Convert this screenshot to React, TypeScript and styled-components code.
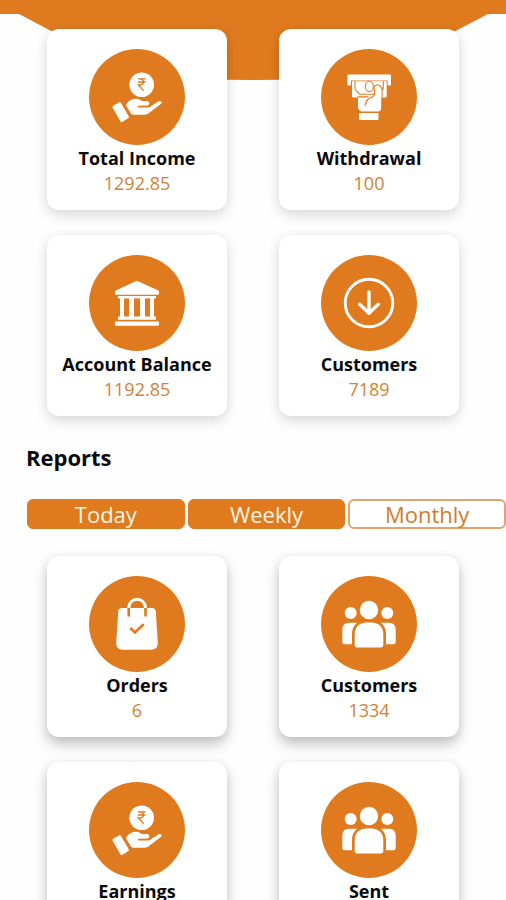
import React from "react";
import styled, { createGlobalStyle } from "styled-components";

const ORANGE = "#df7b1e";

const GlobalStyle = createGlobalStyle`
  *, *::before, *::after { box-sizing: border-box; }
  body {
    margin: 0;
    background: #fefefe;
    color: #0a0a0a;
    font-family: "Open Sans", "Noto Sans", sans-serif;
  }
`;

const Page = styled.main`
  height: 100vh;
  overflow-x: hidden;
  overflow-y: auto;
  scrollbar-width: none;
`;

const Banner = styled.header`
  height: 80px;
  margin-bottom: -51px;
  background: ${ORANGE};
  clip-path: polygon(
    0 0, 100% 0, 100% 14px, calc(100% - 18px) 14px, calc(100% - 142px) 79px,
    50% 100%, 142px 79px, 19px 14px, 0 14px
  );
`;

const CardGrid = styled.section`
  position: relative;
  display: grid;
  grid-template-columns: 1fr 1fr;
  gap: 25px 52px;
  padding: 0 47px;
`;

const Card = styled.article<{ $raised?: boolean }>`
  display: flex;
  flex-direction: column;
  align-items: center;
  min-height: 181px;
  padding-top: 20px;
  border-radius: 12px;
  background: #fff;
  box-shadow: ${({ $raised }) =>
    $raised
      ? "0 7px 14px rgba(0, 0, 0, 0.24), 0 0 10px rgba(0, 0, 0, 0.05)"
      : "0 5px 14px rgba(0, 0, 0, 0.14), 0 0 10px rgba(0, 0, 0, 0.04)"};
`;

const Badge = styled.svg`
  display: block;
  width: 96px;
  height: 96px;
`;

const CardTitle = styled.h2`
  margin: 0;
  font-size: 18px;
  font-weight: 700;
  line-height: 26px;
  white-space: nowrap;
`;

const CardValue = styled.p`
  margin: 0;
  color: #cf8336;
  font-size: 18px;
  line-height: 24px;
`;

const Heading = styled.h1`
  margin: 26px 26px 0;
  font-size: 22px;
  font-weight: 700;
  line-height: 30px;
`;

const Tabs = styled.nav`
  display: grid;
  grid-template-columns: repeat(3, 1fr);
  gap: 3px;
  margin: 27px 0;
  padding-left: 27px;
`;

const Tab = styled.button<{ $filled: boolean }>`
  height: 30px;
  padding: 0;
  border: ${({ $filled }) => ($filled ? `1px solid ${ORANGE}` : "2px solid #e0a46c")};
  border-radius: 6px;
  background: ${({ $filled }) => ($filled ? ORANGE : "#fff")};
  color: ${({ $filled }) => ($filled ? "#fff3e2" : "#cf7d2b")};
  font: 400 22px/24px "Open Sans", "Noto Sans", sans-serif;
  cursor: pointer;
`;

const HandCoin = () => (
  <>
    <circle cx="52.7" cy="35.7" r="12.3" />
    <path
      d="M49 29.800h7.500M49 33h7.500M50 29.800c6 0 6 6.200 0 6.200h-.8l5.500 5.800"
      fill="none"
      stroke={ORANGE}
      strokeWidth="1.300"
    />
    <path
      d="M25 58.100l5.700-3.400 7.700 13.300-5.700 3.600z"
      stroke="#fff"
      strokeWidth="3"
      strokeLinejoin="round"
    />
    <path d="M37 56.300c1.400-4 5.700-6.600 10.300-6.600 3.200 0 4.200 2.300 7 2.300h3.400c3.200 0 3.600 4 .8 4.500l-8.800.2c-1.200.2-1.200 1.600 0 1.800h8.800c2.600 0 3.600-1.600 5.200-2.600l6-3.700c2.200-1 4 1 2.400 2.600L60 64c-1.500 1.200-2.400 1.700-4 1.700H44.600c-1.500 0-2.300-.4-3-1.600z" />
  </>
);

const CashMachine = () => (
  <>
    <path d="M27.700 25.500h41q1.300 0 1.300 1.300v8.700q0 1-1 1h-1.300q-1 0-1-1v-4H30v4q0 1-1 1h-1.600q-1 0-1-1v-8.700q0-1.300 1.300-1.300z" />
    <path d="M31 32.300h34.700v14.600q0 1.700-1.700 1.700H32.700q-1.700 0-1.700-1.700z" />
    <g stroke={ORANGE} strokeWidth="1.100" fill="none">
      <path d="M34 32.300v6.500q0 2.500 2.200 4l2.400 2.400h14.600" />
      <path d="M62.300 32.300v7.500l-1.600 1.600" />
      <ellipse cx="48.300" cy="37.500" rx="4" ry="5.200" />
      <path d="M53.300 41.500q-1-4.500 1.700-5.300c3-.6 6.200 1 6 5.300v7" />
    </g>
    <path d="M54 40q.3-2.700 2.900-2.700 3 0 3.300 3.500V59q0 3.500-3.500 3.500H40.500q-3.500-1-3.500-5.500v-9h12q4.600-1.300 5-4z" />
    <path
      d="M36.500 47.800h11M53.500 41v3.500q.2 2.500-3.500 4-4 1.500-4.800 4.500l-1.200 3.800"
      fill="none"
      stroke={ORANGE}
      strokeWidth="1.200"
    />
    <rect x="38" y="64" width="19.500" height="7" rx="1" />
  </>
);

const Bank = () => (
  <>
    <path d="M48 25.700l20.800 9.500q1.200.6 1.200 1.700v1.600q0 1.200-1.200 1.200H27.200q-1.200 0-1.200-1.200v-1.600q0-1.100 1.200-1.700z" />
    <rect x="29" y="41" width="38" height="2.400" />
    <path d="M31 43h4v19h-4zM40 43h5v19h-5zM51 43h5v19h-5zM61 43h4v19h-4z" />
    <rect x="29" y="61.500" width="38" height="3.200" rx="0.600" />
    <rect x="26" y="66.500" width="44" height="4.300" rx="1" />
  </>
);

const DownArrow = () => (
  <g fill="none" stroke="#fff" strokeLinecap="round" strokeLinejoin="round">
    <circle cx="48" cy="48" r="23.800" strokeWidth="2.900" />
    <path d="M48 37v21M38.700 49.200l9.300 9 9.300-9" strokeWidth="3.400" />
  </g>
);

const Bag = () => (
  <>
    <path d="M33 32h30q3.500 0 3.800 3.500l2 31.500q0 6.700-6.800 6.700H34q-6.800 0-6.800-6.700l2-31.500Q29.500 32 33 32z" />
    <path d="M39.700 32.500c0-12.500 16.800-12.500 16.800 0" fill="none" stroke="#fff" strokeWidth="3" />
    <g fill="none" stroke={ORANGE} strokeWidth="2.600">
      <path d="M39.700 32v8.500M56.500 32v8.500" />
      <path d="M41.300 52l4.700 4.500 8.700-8.200" />
    </g>
  </>
);

const People = () => (
  <>
    <circle cx="48" cy="34" r="9.200" />
    <circle cx="29.700" cy="37" r="6" />
    <circle cx="66.300" cy="37" r="6" />
    <path d="M28 46.700h8q-5 4.300-5 11.300v10.300h-7.500q-2.200 0-2.200-2.200V54q0-7.300 6.700-7.300z" />
    <path d="M68 46.700h-8q5 4.300 5 11.300v10.300h7.500q2.200 0 2.200-2.200V54q0-7.300-6.700-7.300z" />
    <path d="M44.700 46.500h6.600q11 1 11 12v10.300q0 2.700-2.700 2.700H36.400q-2.700 0-2.700-2.700V58.500q0-11 11-12z" />
  </>
);

type Stat = { title: string; value?: string; icon: React.ComponentType };

const overview: Stat[] = [
  { title: "Total Income", value: "1292.85", icon: HandCoin },
  { title: "Withdrawal", value: "100", icon: CashMachine },
  { title: "Account Balance", value: "1192.85", icon: Bank },
  { title: "Customers", value: "7189", icon: DownArrow },
];

const reports: Stat[] = [
  { title: "Orders", value: "6", icon: Bag },
  { title: "Customers", value: "1334", icon: People },
  { title: "Earnings", icon: HandCoin },
  { title: "Sent", icon: People },
];

const StatCard = ({ stat, raised }: { stat: Stat; raised?: boolean }) => {
  const Icon = stat.icon;
  return (
    <Card $raised={raised}>
      <Badge viewBox="0 0 96 96" fill="#fff" aria-hidden="true">
        <circle cx="48" cy="48" r="48" fill={ORANGE} />
        <Icon />
      </Badge>
      <CardTitle>{stat.title}</CardTitle>
      {stat.value && <CardValue>{stat.value}</CardValue>}
    </Card>
  );
};

export default function App() {
  const [outlined, setOutlined] = React.useState("Monthly");
  return (
    <>
      <GlobalStyle />
      <Page>
        <Banner />
        <CardGrid>
          {overview.map((stat) => (
            <StatCard key={stat.title} stat={stat} />
          ))}
        </CardGrid>
        <Heading>Reports</Heading>
        <Tabs>
          {["Today", "Weekly", "Monthly"].map((name) => (
            <Tab
              key={name}
              type="button"
              $filled={name !== outlined}
              aria-pressed={name === outlined}
              onClick={() => setOutlined(name)}
            >
              {name}
            </Tab>
          ))}
        </Tabs>
        <CardGrid>
          {reports.map((stat) => (
            <StatCard key={stat.title} stat={stat} raised />
          ))}
        </CardGrid>
      </Page>
    </>
  );
}
